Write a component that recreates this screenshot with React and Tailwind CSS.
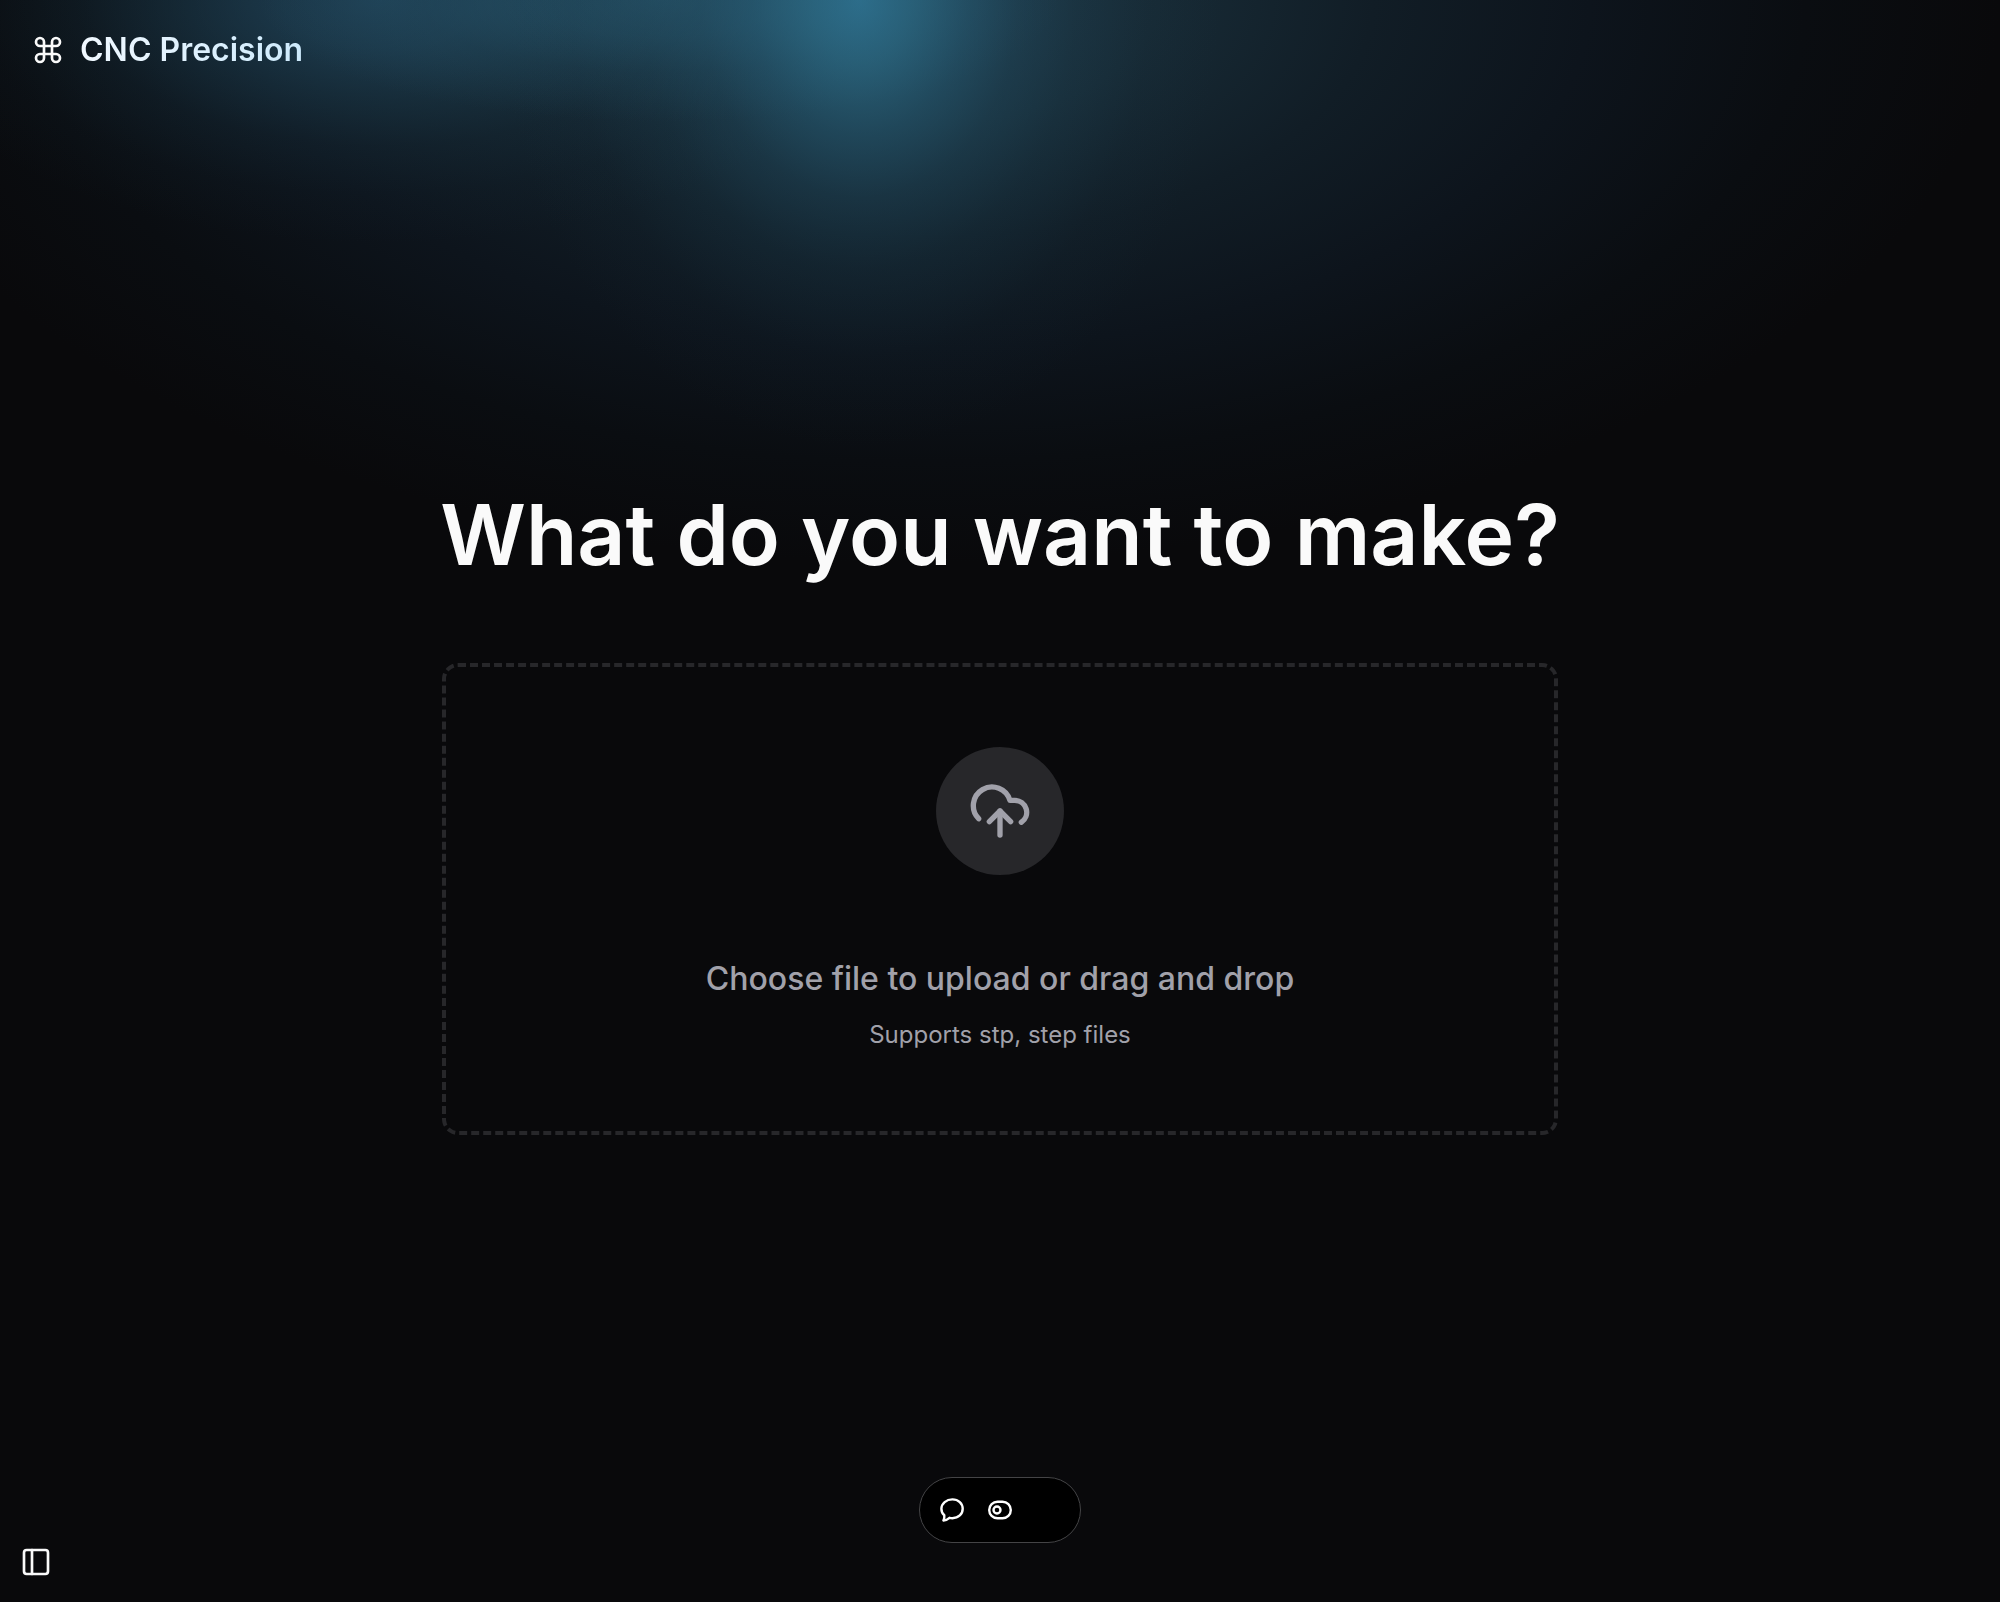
import { Command, PanelLeft } from "lucide-react";

function UploadIcon() {
  return (
    <svg viewBox="0 0 24 24" className="size-16" fill="none" stroke="currentColor" strokeWidth="2" strokeLinecap="round" strokeLinejoin="round" aria-hidden="true">
      <path d="M4 14.899A7 7 0 1 1 15.710 8h1.790a4.500 4.500 0 0 1 2.500 8.242" />
      <path d="M12 12v9" />
      <path d="m16 16-4-4-4 4" />
    </svg>
  );
}

function ChatIcon() {
  return (
    <svg viewBox="0 0 24 24" className="size-6" fill="none" stroke="currentColor" strokeWidth="2.4" strokeLinejoin="round" aria-hidden="true">
      <path d="M12.400 1.400c6 0 10.300 4.100 10.300 9.400s-4.300 9.400-10.300 9.400c-1 0-2-.1-2.900-.4-1.700 1.500-3.800 2.500-6.100 2.700.8-1.500 1.100-3.400.9-5.200C2.300 15.700 1.400 13.400 1.400 10.800c0-5.300 5-9.400 11-9.400Z" />
    </svg>
  );
}

function ToggleIcon() {
  return (
    <svg viewBox="0 0 24 24" className="size-6" fill="none" stroke="currentColor" strokeWidth="2.4" aria-hidden="true">
      <rect x="1.200" y="3.700" width="21.600" height="16.600" rx="8.300" />
      <circle cx="9" cy="12" r="3.500" />
    </svg>
  );
}

function Glow() {
  return (
    <div className="pointer-events-none absolute inset-x-0 top-0 h-[640px] overflow-hidden" aria-hidden="true">
      <div className="absolute inset-0 bg-[radial-gradient(ellipse_54%_88%_at_46%_0%,#1c3341_0%,#172a35_22%,#111d26_42%,#0d141c_62%,#0a0d11_82%,transparent_100%)]" />
      <div className="absolute inset-0 bg-[radial-gradient(ellipse_25%_38%_at_19%_0%,#2a5c7894_0%,#28587280_20%,#2450665c_40%,#1f445733_60%,#1a394b14_80%,transparent_100%)]" />
      <div className="absolute inset-0 bg-[radial-gradient(ellipse_20%_19%_at_33%_0%,#2c637d80_0%,#2a5f7866_30%,#26566d33_60%,transparent_100%)]" />
      <div className="absolute inset-0 bg-[radial-gradient(ellipse_18%_70%_at_43%_0%,#3280a2b8_0%,#2f7592a6_14%,#29647f80_30%,#25576f57_44%,#2250662e_60%,#1a394b12_80%,transparent_100%)]" />
    </div>
  );
}

export default function App() {
  return (
    <div className="relative flex min-h-screen flex-col bg-[#09090b] font-[Inter,sans-serif] text-[#fafafa]">
      <Glow />

      <header className="relative flex h-[100px] items-center gap-4 px-8">
        <Command size={32} strokeWidth={2} aria-hidden="true" />
        <a href="#" className="bg-linear-to-r from-[#f0f8ff] to-[#cdeafc] bg-clip-text text-[32px] leading-10 font-semibold text-transparent">
          CNC Precision
        </a>
      </header>

      <main className="relative flex flex-1 flex-col items-center justify-center gap-[88px] px-8">
        <h1 className="text-center text-[84px] leading-[80px] font-semibold">What do you want to make?</h1>

        <label className="flex w-full max-w-[1116px] cursor-pointer flex-col items-center rounded-2xl border-4 border-dashed border-[#27272a] px-8 py-20 text-center text-[#a1a1aa]">
          <input type="file" accept=".stp,.step" className="sr-only" />
          <span className="flex size-32 items-center justify-center rounded-full bg-[#27272a]">
            <UploadIcon />
          </span>
          <span className="mt-20 text-[32px] leading-12 font-medium">Choose file to upload or drag and drop</span>
          <span className="mt-4 text-2xl leading-8">Supports stp, step files</span>
        </label>
      </main>

      <footer className="relative flex h-[72px] items-start px-5 pt-4">
        <button type="button" aria-label="Toggle sidebar">
          <PanelLeft size={32} strokeWidth={2} aria-hidden="true" />
        </button>
      </footer>

      <div className="absolute bottom-[59px] left-1/2 grid h-[66px] w-[162px] -translate-x-1/2 grid-cols-3 items-center rounded-full border border-[#444446] bg-black px-2 text-white">
        <button type="button" aria-label="Comments" className="flex justify-center">
          <ChatIcon />
        </button>
        <button type="button" aria-label="Feature flags" className="flex justify-center">
          <ToggleIcon />
        </button>
      </div>
    </div>
  );
}
